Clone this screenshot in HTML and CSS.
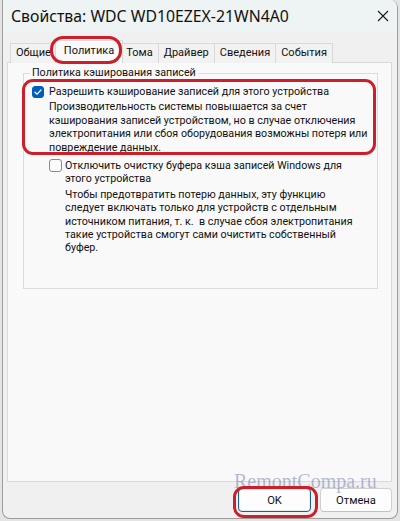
FILE: index.html
```html
<!DOCTYPE html>
<html lang="ru">
<head>
<meta charset="utf-8">
<title>Свойства: WDC WD10EZEX-21WN4A0</title>
<link rel="stylesheet" href="styles.css">
</head>
<body>
<div class="window">
  <header class="titlebar">
    <span class="title">Свойства: WDC WD10EZEX-21WN4A0</span>
    <svg class="close" width="12" height="12" viewBox="0 0 12 12"><path d="M1 1 L11 11 M11 1 L1 11" stroke="#1a1a1a" stroke-width="1.1" fill="none"/></svg>
  </header>
  <main class="content">
    <nav class="tabs">
      <span class="tab">Общие</span>
      <span class="tab active">Политика</span>
      <span class="tab">Тома</span>
      <span class="tab">Драйвер</span>
      <span class="tab">Сведения</span>
      <span class="tab">События</span>
    </nav>
    <section class="panel">
      <fieldset class="group">
        <legend class="group-title">Политика кэширования записей</legend>
        <div class="group-body">
          <div class="option">
            <span class="check checked"><svg width="10" height="10" viewBox="0 0 10 10"><path d="M2 5.2 L4.1 7.2 L8 3" stroke="#fff" stroke-width="1.2" fill="none" stroke-linecap="round" stroke-linejoin="round"/></svg></span>
            <div class="option-text">
              <div class="label">Разрешить кэширование записей для этого устройства</div>
              <p class="desc">Производительность системы повышается за счет<br>кэширования записей устройством, но в случае отключения<br>электропитания или сбоя оборудования возможны потеря или<br>повреждение данных.</p>
            </div>
          </div>
          <div class="option sub">
            <span class="check"></span>
            <div class="option-text">
              <div class="label">Отключить очистку буфера кэша записей Windows для<br>этого устройства</div>
              <p class="desc">Чтобы предотвратить потерю данных, эту функцию<br>следует включать только для устройств с отдельным<br>источником питания, т. к.&nbsp; в случае сбоя электропитания<br>такие устройства смогут сами очистить собственный<br>буфер.</p>
            </div>
          </div>
        </div>
      </fieldset>
    </section>
  </main>
  <footer class="footer">
    <button class="btn btn-default">OK</button>
    <button class="btn">Отмена</button>
  </footer>
  <div class="watermark">RemontCompa.ru</div>
  <div class="mark mark-tab"></div>
  <div class="mark mark-group"></div>
  <div class="mark mark-ok"></div>
</div>
</body>
</html>
```

FILE: styles.css
```css
* { box-sizing: border-box; }
html, body { margin: 0; padding: 0; }
body {
  background: #e4e4e4;
  font-family: Roboto, "Noto Sans", sans-serif;
  font-size: 10.7px;
  color: #111;
  width: 400px;
  height: 521px;
  overflow: hidden;
}
.window {
  position: relative;
  margin-left: 2px;
  width: 396px;
  height: 519px;
  border: 1px solid #9c9c9c;
  border-top: none;
  border-radius: 0 8px 8px 8px;
  background: #f0f0f0;
  display: flex;
  flex-direction: column;
  overflow: hidden;
}
.titlebar {
  height: 32px;
  flex: none;
  background: #eef3f3;
  display: flex;
  align-items: center;
  justify-content: space-between;
  padding: 0 8px 0 8px;
}
.title {
  font-family: "Noto Sans", sans-serif;
  font-size: 15.8px;
  color: #111;
}
.close { display: block; }
.content {
  flex: none;
  padding: 8px 5px 0 4px;
}
.tabs {
  display: flex;
  align-items: flex-end;
  height: 23px;
  margin-bottom: -1px;
  padding-left: 3px;
  position: relative;
  z-index: 1;
}
.tab {
  height: 20px;
  line-height: 18px;
  padding: 0 5px;
  border: 1px solid #d9d9d9;
  border-bottom: none;
  border-left: none;
  background: #f2f2f2;
  color: #111;
  white-space: nowrap;
  font-size: 11px;
}
.tab:first-child { border-left: 1px solid #d9d9d9; }
.tab.active {
  height: 23px;
  line-height: 20px;
  padding: 0 8px;
  margin: 0 -2px;
  border-left: 1px solid #d9d9d9;
  background: #f9f9f9;
  position: relative;
  z-index: 2;
}
.panel {
  height: 420px;
  background: #f9f9f9;
  border: 1px solid #d9d9d9;
  padding: 3px 13px 0 15px;
}
.group {
  margin: 0;
  padding: 0;
  border: 1px solid #dcdcdc;
  min-width: 0;
}
.group-title {
  margin-left: 6px;
  padding: 0 2px;
  line-height: 14px;
  color: #111;
}
.group-body {
  padding: 5px 8px 33px 8px;
}
.option {
  display: flex;
  align-items: flex-start;
  gap: 5px;
}
.option.sub {
  margin: 5px 0 0 17px;
  gap: 3px;
}
.check {
  flex: none;
  width: 12px;
  height: 12px;
  margin-top: 1px;
  border: 1px solid #8a8a8a;
  border-radius: 3px;
  background: #fbfbfb;
  display: flex;
  align-items: center;
  justify-content: center;
}
.option.sub .check { width: 13px; height: 13px; margin-top: 0; }
.check.checked {
  background: #005fb8;
  border-color: #005fb8;
}
.check svg { display: block; }
.label { line-height: 13.4px; white-space: nowrap; }
.desc {
  margin: 2px 0 0;
  line-height: 13.4px;
  white-space: nowrap;
}
.footer {
  flex: 1;
  display: flex;
  justify-content: flex-end;
  align-items: flex-start;
  gap: 9px;
  padding: 6px 5px 0 0;
}
.btn {
  width: 72px;
  height: 24px;
  font-family: inherit;
  font-size: 11.2px;
  color: #111;
  background: #fdfdfd;
  border: 1px solid #d0d0d0;
  border-bottom-color: #c0c0c0;
  border-radius: 4px;
  padding: 0;
}
.btn-default {
  width: 73px;
  border: 1px solid #1f5f86;
  box-shadow: inset 0 0 0 1px #e6eef4;
}
.watermark {
  position: absolute;
  left: 231px;
  top: 470px;
  font-family: "Liberation Serif", serif;
  font-size: 20px;
  color: rgba(110, 120, 175, 0.5);
  pointer-events: none;
  z-index: 3;
}
.mark {
  position: absolute;
  border: 3px solid #cc1f2a;
  z-index: 4;
}
.mark-tab { left: 47px; top: 36px; width: 72px; height: 28px; border-radius: 13px; }
.mark-group { left: 19px; top: 79px; width: 354px; height: 76px; border-radius: 11px; }
.mark-ok { left: 230px; top: 486px; width: 85px; height: 32px; border-radius: 11px; }
```
